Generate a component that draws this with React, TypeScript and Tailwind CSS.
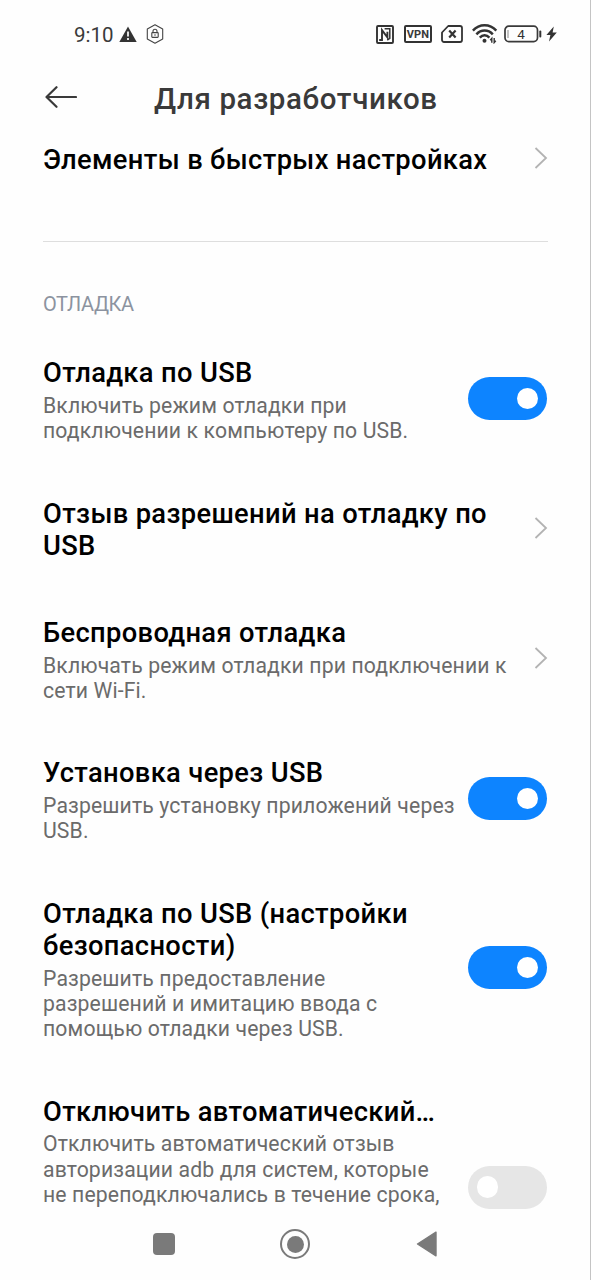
type Item = {
  title: string[]
  description?: string[]
  control: 'chevron' | 'on' | 'off'
}

const items: Item[] = [
  {
    title: ['Отладка по USB'],
    description: ['Включить режим отладки при', 'подключении к компьютеру по USB.'],
    control: 'on',
  },
  {
    title: ['Отзыв разрешений на отладку по', 'USB'],
    control: 'chevron',
  },
  {
    title: ['Беспроводная отладка'],
    description: ['Включать режим отладки при подключении к', 'сети Wi-Fi.'],
    control: 'chevron',
  },
  {
    title: ['Установка через USB'],
    description: ['Разрешить установку приложений через', 'USB.'],
    control: 'on',
  },
  {
    title: ['Отладка по USB (настройки', 'безопасности)'],
    description: ['Разрешить предоставление', 'разрешений и имитацию ввода с', 'помощью отладки через USB.'],
    control: 'on',
  },
]

function Chevron() {
  return (
    <svg width="14" height="24" viewBox="0 0 14 24" fill="none" stroke="#b3b3b3" strokeWidth="1.8" className="shrink-0">
      <path d="M1.5 2 L12 12 L1.5 22" />
    </svg>
  )
}

function Toggle({ on }: { on: boolean }) {
  return (
    <div
      className={`mr-[1.5px] flex h-[43px] w-[78.5px] shrink-0 items-center rounded-full px-[8.5px] ${
        on ? 'justify-end bg-[#0d84ff]' : 'justify-start bg-[#e6e6e6]'
      }`}
    >
      <div className="size-[21.5px] rounded-full bg-white" />
    </div>
  )
}

function ItemText({ title, description }: { title: string[]; description?: string[] }) {
  return (
    <div className="whitespace-nowrap">
      {title.map((line) => (
        <div key={line} className="text-[27.3px] font-medium leading-[31.8px] tracking-[0.35px] text-black">
          {line}
        </div>
      ))}
      {description && (
        <div className="mt-[3px] text-[21.2px] leading-[25.2px] tracking-[0.13px] text-[#6b6b6b]">
          {description.map((line) => (
            <div key={line}>{line}</div>
          ))}
        </div>
      )}
    </div>
  )
}

function StatusBar() {
  return (
    <div className="flex h-[68px] shrink-0 items-center justify-between pl-[74px] pr-[33px] text-[#3a3a3a]">
      <div className="flex items-center">
        <span className="w-[45px] pt-px text-[20.5px] leading-6">9:10</span>
        <svg width="18" height="17" viewBox="0 0 18 17">
          <path d="M9 0.5 L17.7 16 H0.3 Z" fill="#333" />
          <path d="M9 5.5 V10.5 M9 12 V14" stroke="#fff" strokeWidth="1.7" />
        </svg>
        <svg width="18" height="20" viewBox="0 0 18 20" fill="none" stroke="#444" strokeWidth="1.1" className="ml-[9px]">
          <path d="M9 0.8 L16.7 5 V15 L9 19.2 L1.3 15 V5 Z" strokeLinejoin="round" />
          <rect x="5.8" y="8.6" width="6.4" height="4.8" rx="0.6" />
          <path d="M7 8.6 V7.3 a2 2 0 0 1 4 0 V8.6 M9 10.3 V11.8" />
        </svg>
      </div>

      <div className="flex items-center">
        <svg width="18" height="19" viewBox="0 0 18 19" fill="none" stroke="#333" strokeWidth="1.9">
          <rect x="1" y="1" width="16" height="17" rx="1" />
          <path d="M3.2 15 H6 V5.2 L11.4 12.4 V6.8" strokeWidth="1.9" />
          <path d="M8.6 3.8 H13.8 V13.4 L11.2 15" strokeWidth="1.5" />
        </svg>
        <div className="ml-[10px] flex h-[18px] w-[28px] items-center justify-center rounded-[2px] border-2 border-[#333] text-[11px] font-bold leading-none tracking-[0.2px]">
          VPN
        </div>
        <svg width="22" height="18" viewBox="0 0 22 18" fill="none" stroke="#333" strokeWidth="1.8" className="ml-[9px]">
          <path d="M7.2 1 H19 a2 2 0 0 1 2 2 V15 a2 2 0 0 1 -2 2 H3 a2 2 0 0 1 -2 -2 V7.5 Z" strokeLinejoin="round" />
          <path d="M8.2 5.6 L14.6 12.4 M14.6 5.6 L8.2 12.4" strokeWidth="2.2" />
        </svg>
        <svg width="26" height="20" viewBox="0 0 26 20" fill="none" stroke="#333" strokeWidth="2.5" className="ml-[9px]">
          <path d="M0.9 6.6 C7.5 -0.5 17.7 -0.5 24.3 6.6" />
          <path d="M4.4 10.3 C9 5.3 16.2 5.3 20.8 10.3" />
          <path d="M7.8 13.6 C10.6 10.6 14.6 10.6 17.4 13.6" />
          <circle cx="12.5" cy="16.8" r="2" fill="#333" stroke="none" />
          <path d="M19.8 18.8 V14.4 L18.2 16.2 M22.2 14 V18.6 L23.8 16.8" strokeWidth="1.4" />
        </svg>
        <svg width="38" height="18" viewBox="0 0 38 18" className="ml-[6px]">
          <rect x="1" y="1.2" width="32.5" height="15.4" rx="3.8" fill="none" stroke="#3a3a3a" strokeWidth="1.7" />
          <path d="M4 5 V13" stroke="#888" strokeWidth="1" />
          <path d="M36.3 6.5 V11.5" stroke="#333" strokeWidth="2" strokeLinecap="round" />
          <text x="17" y="13.6" textAnchor="middle" fontSize="13.5" fill="#333">
            4
          </text>
        </svg>
        <svg width="11" height="16" viewBox="0 0 11 16" className="ml-[4px]">
          <path d="M7.8 0.6 L0.4 9 H4.4 L3 15.6 L10.8 6.6 H6.6 Z" fill="#333" />
        </svg>
      </div>
    </div>
  )
}

export default function App() {
  return (
    <div className="flex h-[1280px] w-[591px] flex-col overflow-hidden border-r border-[#c4c4c4] bg-[#fefefe] font-[Roboto,sans-serif]">
      <StatusBar />

      {/* Header */}
      <div className="flex h-[62px] shrink-0 items-center pl-[45px]">
        <svg width="32" height="22" viewBox="0 0 32 22" fill="none" stroke="#3a3a3a" strokeWidth="2.2" strokeLinecap="round" strokeLinejoin="round" className="-mt-1">
          <path d="M31 11 H1.5 M11.5 1.2 L1.5 11 L11.5 20.8" />
        </svg>
        <h1 className="ml-[77px] whitespace-nowrap text-[29.5px] font-medium leading-9 tracking-[0.63px] text-[#3a3a3a]">
          Для разработчиков
        </h1>
      </div>

      {/* Settings list */}
      <div className="h-[1079px] shrink-0 overflow-hidden pl-[43px] pr-[42px]">
        <div className="flex h-[112px] items-start justify-between border-b border-[#dedede] pt-[15px]">
          <ItemText title={['Элементы в быстрых настройках']} />
          <div className="pt-[1px]">
            <Chevron />
          </div>
        </div>

        <div className="pt-[50px] text-[20px] leading-6 tracking-[-0.4px] text-[#8c93a0]">ОТЛАДКА</div>

        <div className="flex flex-col gap-[55.4px] pt-[42.3px]">
          {items.map((item) => (
            <div key={item.title[0]} className="flex items-center justify-between">
              <ItemText title={item.title} description={item.description} />
              <div className="pb-[5px]">
                {item.control === 'chevron' ? <Chevron /> : <Toggle on={item.control === 'on'} />}
              </div>
            </div>
          ))}
          <div className="flex justify-between">
            <ItemText
              title={['Отключить автоматический…']}
              description={['Отключить автоматический отзыв', 'авторизации adb для систем, которые', 'не переподключались в течение срока,']}
            />
            <div className="pt-[69px]">
              <Toggle on={false} />
            </div>
          </div>
        </div>
      </div>

      {/* Navigation buttons */}
      <div className="flex flex-1 items-center pb-[1px] pl-[153px]">
        <div className="size-[22px] rounded-[4px] bg-[#7a7a7a]" />
        <div className="ml-[105px] flex size-[30px] items-center justify-center rounded-full border-[2.5px] border-[#7a7a7a]">
          <div className="size-[17px] rounded-full bg-[#7a7a7a]" />
        </div>
        <svg width="22" height="26" viewBox="0 0 22 26" className="ml-[105.5px]">
          <path d="M1.5 13 L20 1.2 V24.8 Z" fill="#7a7a7a" stroke="#7a7a7a" strokeWidth="1.4" strokeLinejoin="round" />
        </svg>
      </div>
    </div>
  )
}
